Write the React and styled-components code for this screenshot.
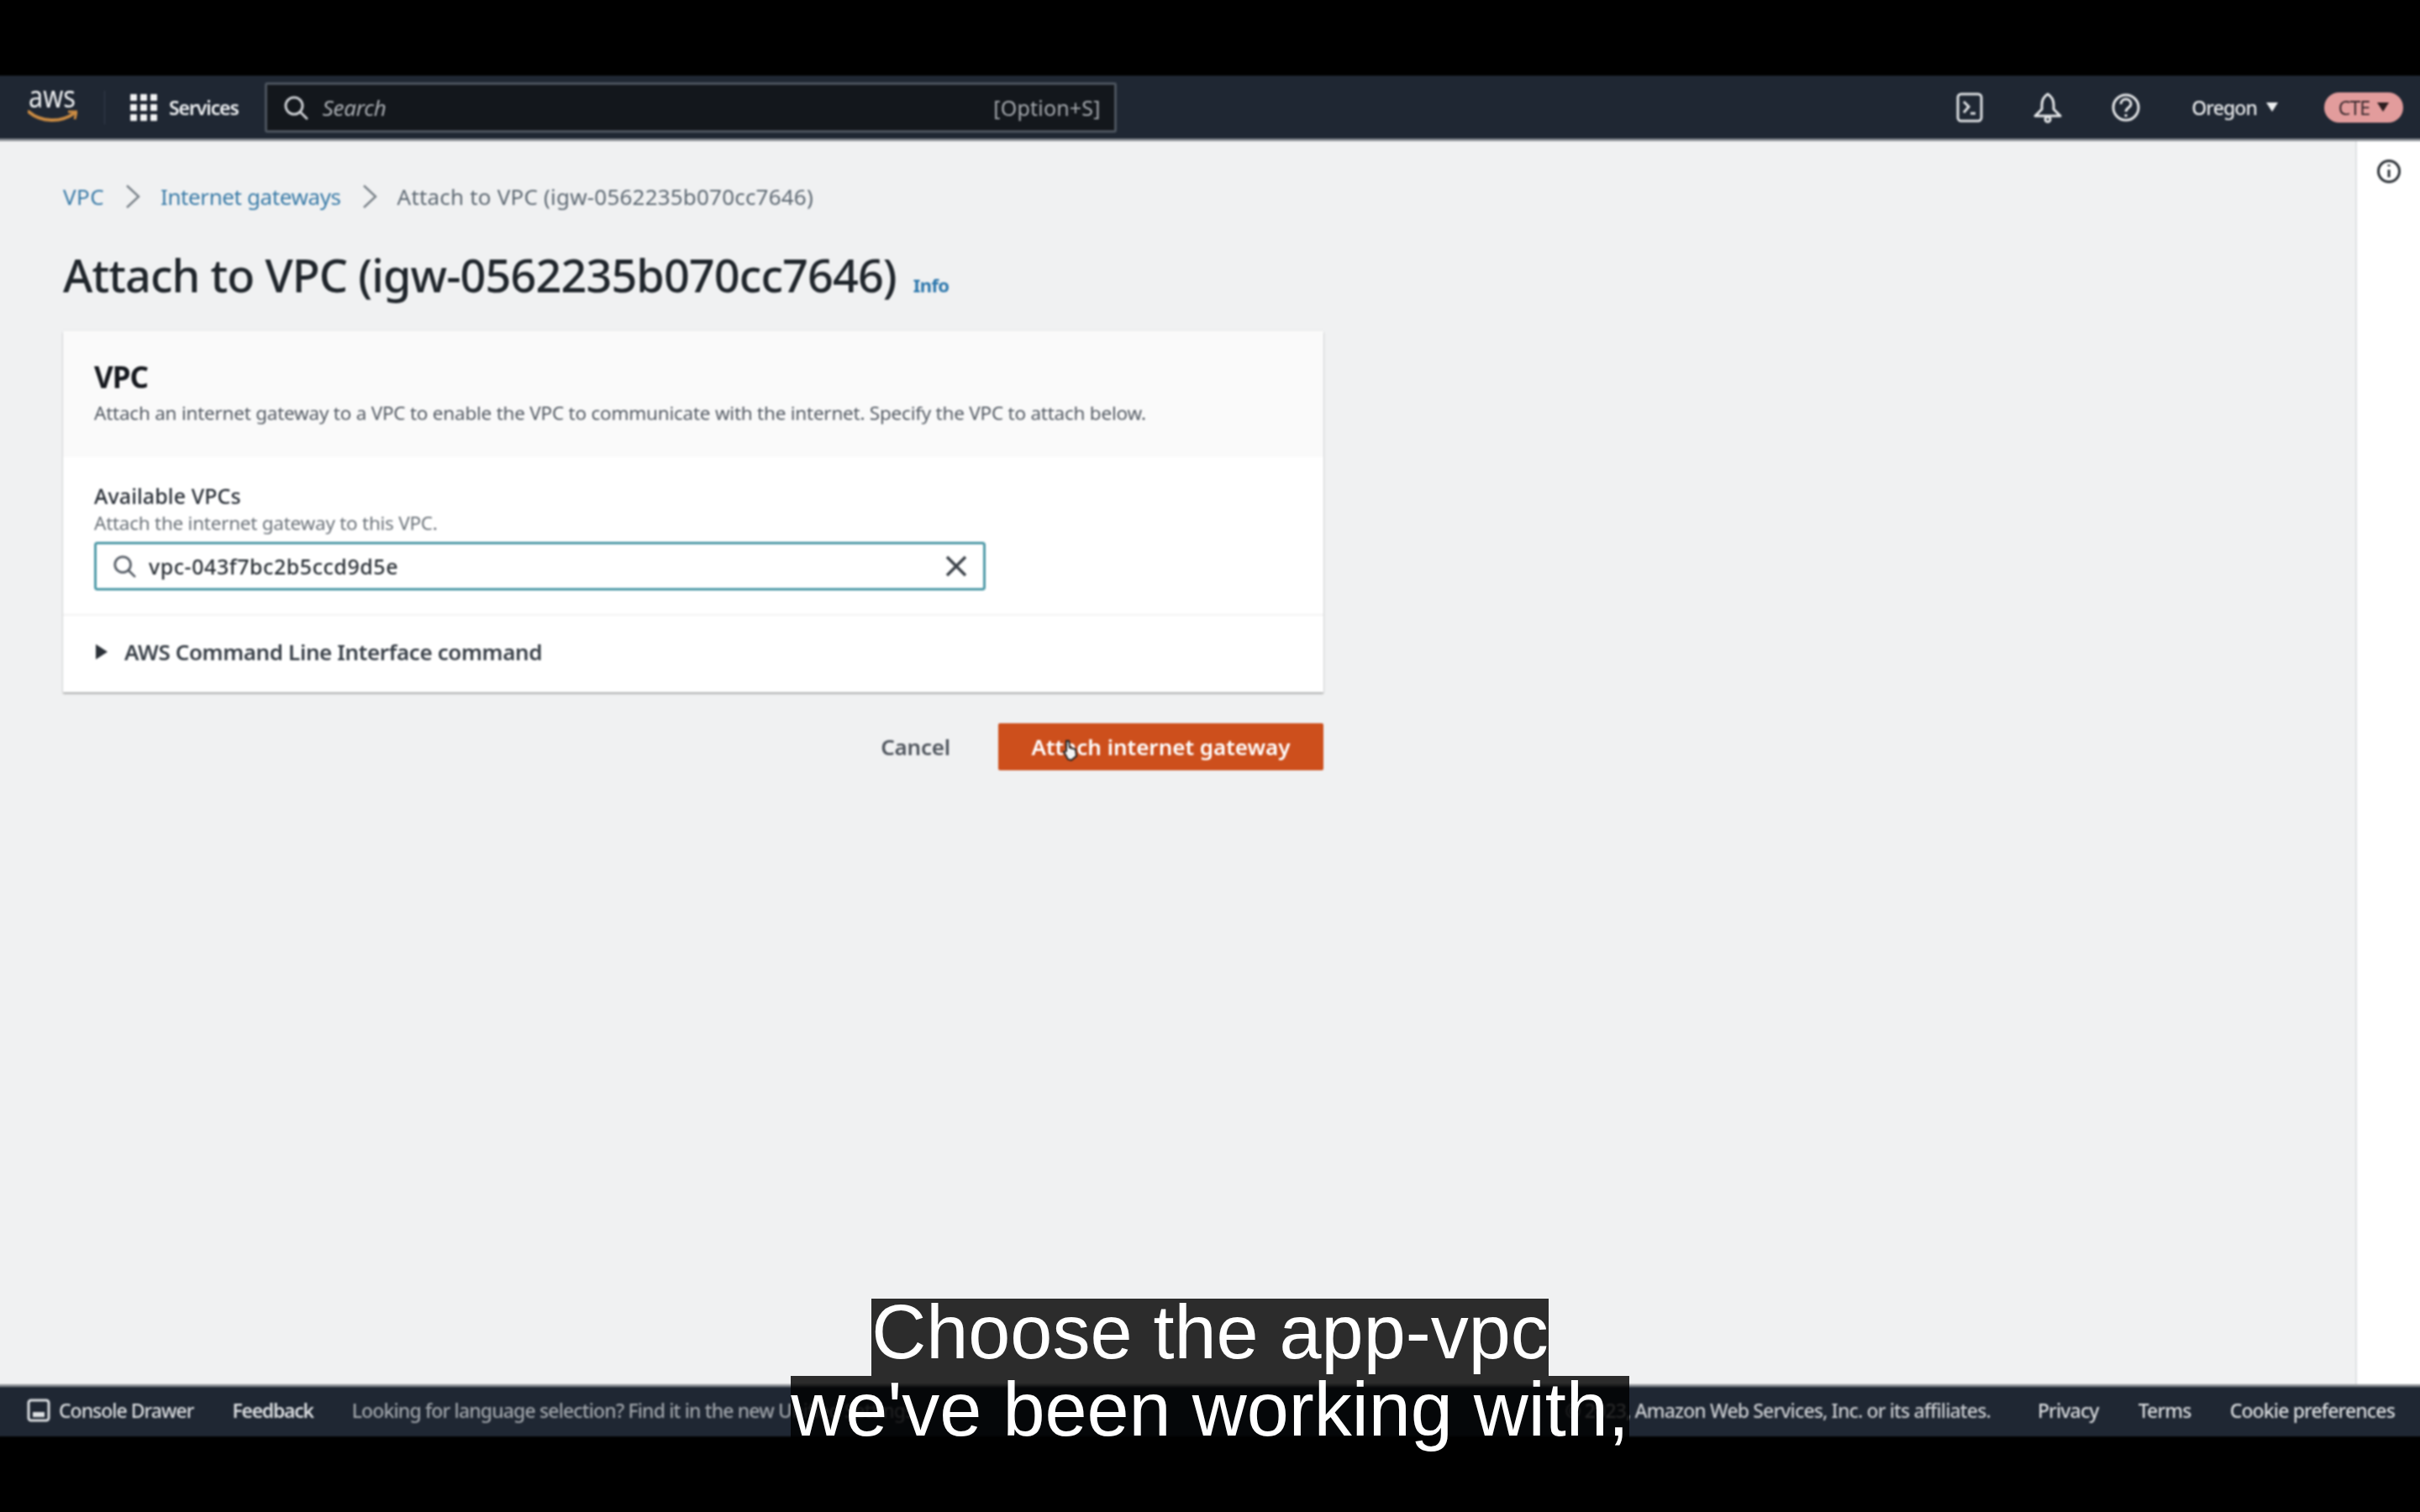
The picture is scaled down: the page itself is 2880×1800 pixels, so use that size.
import React from 'react';
import styled, { createGlobalStyle } from 'styled-components';

const GlobalStyle = createGlobalStyle`
  html, body {
    margin: 0;
    background: #000;
  }
  * {
    box-sizing: border-box;
  }
`;

const Screen = styled.div`
  position: relative;
  width: 2880px;
  height: 1800px;
  padding: 90px 0;
  background: #000;
  overflow: hidden;
  font-family: "Noto Sans", "Open Sans", sans-serif;
`;

/* runs 4px past the screen on each side so the blur doesn't darken the edges */
const Console = styled.div`
  height: 1620px;
  margin: 0 -4px;
  display: flex;
  flex-direction: column;
  background: #f0f1f2;
  filter: blur(0.9px);
`;

const NavBar = styled.header`
  height: 78px;
  flex: none;
  display: flex;
  align-items: center;
  background: #1f2733;
  border-bottom: 3px solid #8b8f94;
  padding: 0 24px 0 37px;
  color: #e4e6e8;
`;

const LogoWrap = styled.div`
  width: 59px;
  height: 85px;
  flex: none;
`;

const NavDivider = styled.span`
  width: 1px;
  height: 40px;
  flex: none;
  background: #333d4a;
  margin: ${p => p.$margin || '0'};
`;

const ServicesLabel = styled.span`
  font-size: 23px;
  font-weight: 600;
  letter-spacing: -1.1px;
  margin: 0 31px 0 14px;
  color: #eceef0;
`;

const SearchBox = styled.div`
  width: 1014px;
  height: 60px;
  flex: none;
  display: flex;
  align-items: center;
  padding: 0 16px 0 19px;
  background: #13171c;
  border: 3px solid #4b535d;
  border-radius: 3px;
`;

const SearchText = styled.span`
  flex: 1;
  margin-left: 17px;
  font-size: 26px;
  font-style: italic;
  color: #a9adb2;
  letter-spacing: -0.3px;
`;

const ShortcutText = styled.span`
  font-size: 25px;
  color: #a5a9ae;
  letter-spacing: 0.2px;
`;

const NavRight = styled.div`
  margin-left: auto;
  display: flex;
  align-items: center;
`;

const NavIcon = styled.span`
  width: 93px;
  display: flex;
  justify-content: center;
  align-items: center;
`;

const RegionLabel = styled.span`
  font-size: 23px;
  font-weight: 500;
  letter-spacing: -0.9px;
  color: #e7e9eb;
  margin-left: 32px;
`;

const Caret = styled.span`
  width: 0;
  height: 0;
  border-left: 7px solid transparent;
  border-right: 7px solid transparent;
  border-top: 11px solid ${p => p.$color || '#eceef0'};
  margin-left: ${p => p.$gap || 13}px;
`;

const AccountPill = styled.span`
  width: 94px;
  height: 36px;
  margin-left: 55px;
  border-radius: 18px;
  background: #e29c9c;
  display: flex;
  align-items: center;
  justify-content: center;
  font-size: 23px;
  color: #3a2a2e;
  letter-spacing: -0.8px;
`;

const Main = styled.div`
  flex: 1;
  min-height: 0;
  display: flex;
`;

const Content = styled.main`
  flex: 1;
  padding: 44px 0 0 79px;
`;

const Breadcrumbs = styled.nav`
  height: 44px;
  display: flex;
  align-items: center;
  font-size: 26px;
`;

const Crumb = styled.span`
  letter-spacing: ${p => p.$spacing}px;
  color: ${p => (p.$current ? '#5f6a74' : '#3b7ca8')};
`;

const CrumbSep = styled.span`
  display: flex;
  margin: 0 24px 0 25px;
`;

const TitleRow = styled.div`
  display: flex;
  align-items: baseline;
  margin-top: 32px;
  height: 78px;
`;

const Title = styled.h1`
  margin: 0;
  font-size: 54px;
  line-height: 78px;
  font-weight: 500;
  letter-spacing: -0.92px;
  color: #20262c;
`;

const InfoLink = styled.span`
  margin-left: 20px;
  font-size: 22px;
  font-weight: 700;
  letter-spacing: -0.6px;
  color: #2e78ad;
`;

const Card = styled.section`
  width: 1500px;
  margin-top: 28px;
  background: #fff;
  box-shadow: 0 2px 2px rgba(0, 0, 0, 0.28), 0 0 2px rgba(0, 0, 0, 0.08);
`;

const CardHeader = styled.div`
  height: 150px;
  padding: 32px 37px 0;
  background: #fafafa;
`;

const CardTitle = styled.h2`
  margin: 0;
  font-size: 35px;
  line-height: 46px;
  font-weight: 700;
  letter-spacing: -1px;
  color: #16191f;
`;

const CardDescription = styled.p`
  margin: 4px 0 0;
  font-size: 22.5px;
  line-height: 32px;
  letter-spacing: -0.23px;
  color: #545b64;
`;

const CardBody = styled.div`
  height: 189px;
  padding: 28px 37px 0;
  border-bottom: 2px solid #f3f3f3;
`;

const FieldLabel = styled.label`
  display: block;
  font-size: 25px;
  line-height: 36px;
  font-weight: 500;
  letter-spacing: 0.1px;
  color: #2a3038;
`;

const FieldHint = styled.div`
  font-size: 22.5px;
  line-height: 30px;
  letter-spacing: -0.25px;
  color: #6c737a;
`;

const SelectInput = styled.div`
  width: 1061px;
  height: 58px;
  margin-top: 7px;
  display: flex;
  align-items: center;
  padding: 0 19px 0 19px;
  background: #fff;
  border: 3px solid #4f9aa8;
  border-radius: 4px;
`;

const SelectValue = styled.span`
  flex: 1;
  margin-left: 15px;
  font-size: 25px;
  font-weight: 500;
  letter-spacing: 0.55px;
  color: #2c3238;
`;

const ExpandRow = styled.div`
  height: 91px;
  display: flex;
  align-items: center;
  padding: 0 0 5px 39px;
`;

const ExpandCaret = styled.span`
  width: 0;
  height: 0;
  border-top: 9px solid transparent;
  border-bottom: 9px solid transparent;
  border-left: 14px solid #2b3138;
`;

const ExpandLabel = styled.span`
  margin-left: 20px;
  font-size: 26px;
  font-weight: 600;
  letter-spacing: -0.38px;
  color: #3a4149;
`;

const Actions = styled.div`
  width: 1500px;
  margin-top: 37px;
  display: flex;
  justify-content: flex-end;
  align-items: center;
`;

const CancelButton = styled.button`
  border: 0;
  padding: 0;
  background: none;
  font-family: inherit;
  font-size: 26px;
  font-weight: 600;
  letter-spacing: -0.2px;
  color: #50565e;
  margin-right: 57px;
`;

const PrimaryButton = styled.button`
  position: relative;
  width: 387px;
  height: 56px;
  border: 0;
  border-radius: 2px;
  background: #cd4f1c;
  font-family: inherit;
  font-size: 26px;
  font-weight: 600;
  letter-spacing: 0;
  color: #fff;
`;

const Cursor = styled.svg`
  position: absolute;
  left: 75px;
  top: 19px;
`;

const SidePanel = styled.aside`
  width: 81px;
  flex: none;
  display: flex;
  justify-content: center;
  padding: 20px 4px 0 0;
  background: #fff;
  border-left: 2px solid #dfe1e3;
`;

const Footer = styled.footer`
  height: 62px;
  flex: none;
  display: flex;
  align-items: center;
  padding: 0 34px 3px 36px;
  background: #1f2733;
  border-top: 3px solid #8b8f94;
  font-size: 23px;
  color: #d8dbde;
  white-space: nowrap;
`;

const FooterItem = styled.span`
  margin-left: ${p => p.$gap || 0}px;
  font-weight: ${p => p.$weight || 500};
  letter-spacing: ${p => p.$spacing ?? -0.85}px;
  color: ${p => p.$color || '#d8dbde'};
`;

const FooterRight = styled.div`
  margin-left: auto;
  display: flex;
  align-items: center;
`;

const Captions = styled.div`
  position: absolute;
  left: 0;
  right: 0;
  top: 1546px;
  display: flex;
  flex-direction: column;
  align-items: center;
  font-family: "Liberation Sans", Arial, sans-serif;
  font-size: 90px;
  line-height: 80px;
  color: #fff;
`;

const CaptionLine = styled.span`
  height: 92px;
  background: rgba(0, 0, 0, 0.82);
  white-space: nowrap;
`;

const AwsLogo = () => (
  <LogoWrap>
    <svg width="59" height="85" viewBox="0 0 59 85">
      <text x="1" y="43" fontFamily="Noto Sans, sans-serif" fontSize="36" fill="#eceef0" textLength="56" lengthAdjust="spacingAndGlyphs">aws</text>
      <path d="M1 48 C16 61 40 61 55 50" fill="none" stroke="#c98a42" strokeWidth="4" strokeLinecap="round" />
      <path d="M48 48 L58 48 L56 57" fill="none" stroke="#c98a42" strokeWidth="3" />
    </svg>
  </LogoWrap>
);

const GridIcon = () => (
  <svg width="32" height="32" viewBox="0 0 32 32" fill="#f0f1f2">
    {[0, 12, 24].map(y =>
      [0, 12, 24].map(x => <rect key={`${x}-${y}`} x={x} y={y} width="8" height="8" rx="1" />)
    )}
  </svg>
);

const SearchIcon = ({ size = 30, color = '#c9ccd0' }) => (
  <svg width={size} height={size} viewBox="0 0 30 30" fill="none" stroke={color} strokeWidth="3">
    <circle cx="13" cy="13" r="10" />
    <path d="M20 20 L28 28" strokeLinecap="round" />
  </svg>
);

const TerminalIcon = () => (
  <svg width="32" height="36" viewBox="0 0 32 36" fill="none" stroke="#dcdfe2" strokeWidth="3">
    <rect x="2" y="2" width="28" height="32" rx="4" />
    <path d="M9 11 L15 17 L9 24" />
    <path d="M17 25 L23 25" />
  </svg>
);

const BellIcon = () => (
  <svg width="34" height="38" viewBox="0 0 34 38" fill="none" stroke="#e4e6e8" strokeWidth="3" strokeLinejoin="round">
    <path d="M17 3 C12 6 10 11 10 16 L10 21 L2 29 L32 29 L24 21 L24 16 C24 11 22 6 17 3 Z" />
    <circle cx="17" cy="33" r="3" />
  </svg>
);

const HelpIcon = () => (
  <svg width="36" height="36" viewBox="0 0 36 36" fill="none" stroke="#e4e6e8" strokeWidth="3">
    <circle cx="18" cy="18" r="15" />
    <path d="M12 14 C12 6 24 6 24 14 C24 18 18 18 18 23" />
    <path d="M18 26 L18 29" />
  </svg>
);

const InfoIcon = () => (
  <svg width="30" height="32" viewBox="0 0 30 32" fill="none" stroke="#2b3036" strokeWidth="3">
    <circle cx="15" cy="16" r="12.5" />
    <path d="M15 8 L15 10" />
    <path d="M15 14 L15 23" />
  </svg>
);

const ChevronIcon = () => (
  <svg width="18" height="30" viewBox="0 0 18 30" fill="none" stroke="#7c848b" strokeWidth="2.5">
    <path d="M2 2 L16 15 L2 28" />
  </svg>
);

const ClearIcon = () => (
  <svg width="26" height="26" viewBox="0 0 26 26" fill="none" stroke="#3d434a" strokeWidth="3.5">
    <path d="M2 2 L24 24 M24 2 L2 24" />
  </svg>
);

const DrawerIcon = () => (
  <svg width="28" height="28" viewBox="0 0 28 28" fill="none">
    <rect x="2" y="2" width="24" height="24" rx="3" stroke="#dcdfe2" strokeWidth="3" />
    <rect x="7" y="16" width="14" height="6" fill="#dcdfe2" />
  </svg>
);

export default function App() {
  return (
    <>
      <GlobalStyle />
      <Screen>
        <Console>
          <NavBar>
            <AwsLogo />
            <NavDivider $margin="0 30px 0 32px" />
            <GridIcon />
            <ServicesLabel>Services</ServicesLabel>
            <SearchBox>
              <SearchIcon />
              <SearchText>Search</SearchText>
              <ShortcutText>[Option+S]</ShortcutText>
            </SearchBox>
            <NavRight>
              <NavIcon><TerminalIcon /></NavIcon>
              <NavIcon><BellIcon /></NavIcon>
              <NavIcon><HelpIcon /></NavIcon>
              <RegionLabel>Oregon</RegionLabel>
              <Caret $gap={11} />
              <AccountPill>
                CTE
                <Caret $color="#2c1e20" $gap={9} />
              </AccountPill>
            </NavRight>
          </NavBar>
          <Main>
            <Content>
              <Breadcrumbs>
                <Crumb $spacing={0.4}>VPC</Crumb>
                <CrumbSep><ChevronIcon /></CrumbSep>
                <Crumb $spacing={-0.4}>Internet gateways</Crumb>
                <CrumbSep><ChevronIcon /></CrumbSep>
                <Crumb $current $spacing={0.2}>Attach to VPC (igw-0562235b070cc7646)</Crumb>
              </Breadcrumbs>
              <TitleRow>
                <Title>Attach to VPC (igw-0562235b070cc7646)</Title>
                <InfoLink>Info</InfoLink>
              </TitleRow>
              <Card>
                <CardHeader>
                  <CardTitle>VPC</CardTitle>
                  <CardDescription>
                    Attach an internet gateway to a VPC to enable the VPC to communicate with the internet. Specify the VPC to attach below.
                  </CardDescription>
                </CardHeader>
                <CardBody>
                  <FieldLabel>Available VPCs</FieldLabel>
                  <FieldHint>Attach the internet gateway to this VPC.</FieldHint>
                  <SelectInput>
                    <SearchIcon size={28} color="#596069" />
                    <SelectValue>vpc-043f7bc2b5ccd9d5e</SelectValue>
                    <ClearIcon />
                  </SelectInput>
                </CardBody>
                <ExpandRow>
                  <ExpandCaret />
                  <ExpandLabel>AWS Command Line Interface command</ExpandLabel>
                </ExpandRow>
              </Card>
              <Actions>
                <CancelButton>Cancel</CancelButton>
                <PrimaryButton>
                  Attach internet gateway
                  <Cursor width="22" height="26" viewBox="0 0 22 26">
                    <path d="M6 2 L9 2 L10 10 L17 12 L18 20 L12 25 L8 24 L3 15 L6 14 Z" fill="#f4f4f4" stroke="#222" strokeWidth="2" />
                  </Cursor>
                </PrimaryButton>
              </Actions>
            </Content>
            <SidePanel>
              <div><InfoIcon /></div>
            </SidePanel>
          </Main>
          <Footer>
            <DrawerIcon />
            <FooterItem $gap={10} $spacing={-1}>Console Drawer</FooterItem>
            <FooterItem $gap={46} $weight={600} $spacing={-1.3}>Feedback</FooterItem>
            <FooterItem $gap={46} $color="#9ea3a9">Looking for language selection? Find it in the new Unified Settings</FooterItem>
            <FooterRight>
              <FooterItem $color="#c9ccd0">© 2023, Amazon Web Services, Inc. or its affiliates.</FooterItem>
              <FooterItem $gap={56}>Privacy</FooterItem>
              <FooterItem $gap={47}>Terms</FooterItem>
              <FooterItem $gap={46}>Cookie preferences</FooterItem>
            </FooterRight>
          </Footer>
        </Console>
        <Captions>
          <CaptionLine>Choose the app-vpc</CaptionLine>
          <CaptionLine>we've been working with,</CaptionLine>
        </Captions>
      </Screen>
    </>
  );
}
